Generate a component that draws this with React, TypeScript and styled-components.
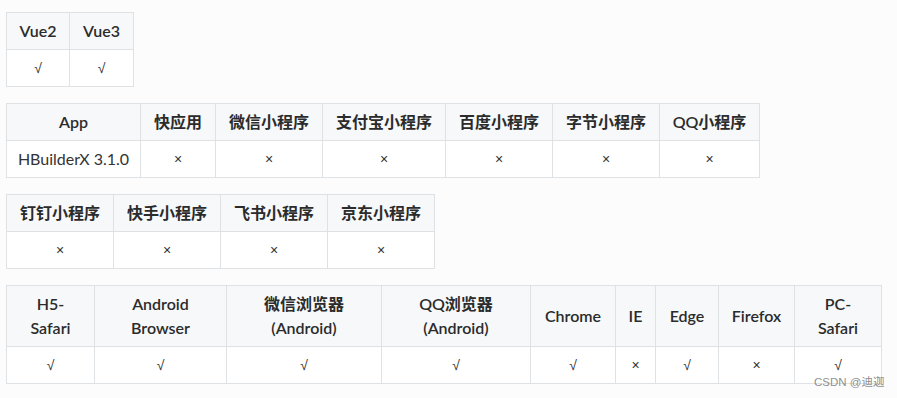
import React from 'react';
import styled, { createGlobalStyle } from 'styled-components';

const GlobalStyle = createGlobalStyle`
  body {
    margin: 0;
    background: #fcfcfc;
    font-family: Lato, "Noto Sans CJK SC", sans-serif;
    color: #333;
  }
`;

const Page = styled.div`
  position: relative;
  width: 897px;
  height: 398px;
  padding: 12px 0 0 6px;
  box-sizing: border-box;
  display: flex;
  flex-direction: column;
  align-items: flex-start;
  gap: 16px;
`;

const Table = styled.table`
  border-collapse: collapse;
  table-layout: fixed;
  font-size: 16px;
`;

const HeadCell = styled.th<{ $tall?: boolean }>`
  background: #f6f8fa;
  border: 1px solid #dfe2e5;
  padding: 0 8px;
  height: ${(p) => (p.$tall ? '60px' : '36px')};
  line-height: ${(p) => (p.$tall ? '24px' : '20px')};
  font-weight: 600;
  text-align: center;
  vertical-align: middle;
  color: #2b2b2b;
`;

const Cell = styled.td<{ $mark?: boolean }>`
  background: #ffffff;
  border: 1px solid #dfe2e5;
  padding: 0 8px;
  height: 36px;
  line-height: 20px;
  text-align: center;
  vertical-align: middle;
  color: #333;
  font-size: ${(p) => (p.$mark ? '14px' : '16px')};
  font-family: ${(p) => (p.$mark ? '"Liberation Sans", sans-serif' : 'inherit')};
`;

const Watermark = styled.span`
  position: absolute;
  left: 814px;
  top: 375px;
  font-size: 11.5px;
  line-height: 15px;
  color: rgba(120, 120, 120, 0.85);
  font-family: "Liberation Sans", "Noto Sans CJK SC", sans-serif;
`;

type Col = { head: React.ReactNode; value: string; width: number };

const tables: Col[][] = [
  [
    { head: 'Vue2', value: '√', width: 63 },
    { head: 'Vue3', value: '√', width: 64 },
  ],
  [
    { head: 'App', value: 'HBuilderX 3.1.0', width: 134 },
    { head: '快应用', value: '×', width: 75 },
    { head: '微信小程序', value: '×', width: 107 },
    { head: '支付宝小程序', value: '×', width: 123 },
    { head: '百度小程序', value: '×', width: 107 },
    { head: '字节小程序', value: '×', width: 107 },
    { head: 'QQ小程序', value: '×', width: 100 },
  ],
  [
    { head: '钉钉小程序', value: '×', width: 107 },
    { head: '快手小程序', value: '×', width: 107 },
    { head: '飞书小程序', value: '×', width: 107 },
    { head: '京东小程序', value: '×', width: 107 },
  ],
  [
    { head: <>H5-<br />Safari</>, value: '√', width: 88 },
    { head: <>Android<br />Browser</>, value: '√', width: 132 },
    { head: <>微信浏览器<br />(Android)</>, value: '√', width: 155 },
    { head: <>QQ浏览器<br />(Android)</>, value: '√', width: 149 },
    { head: 'Chrome', value: '√', width: 85 },
    { head: 'IE', value: '×', width: 40 },
    { head: 'Edge', value: '√', width: 63 },
    { head: 'Firefox', value: '×', width: 76 },
    { head: <>PC-<br />Safari</>, value: '√', width: 87 },
  ],
];

function App() {
  return (
    <>
      <GlobalStyle />
      <Page>
        {tables.map((cols, i) => (
          <Table key={i} style={{ width: cols.reduce((s, c) => s + c.width, 0) }}>
            <colgroup>
              {cols.map((c, j) => (
                <col key={j} style={{ width: c.width }} />
              ))}
            </colgroup>
            <thead>
              <tr>
                {cols.map((c, j) => (
                  <HeadCell key={j} $tall={i === 3}>{c.head}</HeadCell>
                ))}
              </tr>
            </thead>
            <tbody>
              <tr>
                {cols.map((c, j) => (
                  <Cell key={j} $mark={c.value.length === 1}>{c.value}</Cell>
                ))}
              </tr>
            </tbody>
          </Table>
        ))}
        <Watermark>CSDN @迪迦</Watermark>
      </Page>
    </>
  );
}

export default App;
